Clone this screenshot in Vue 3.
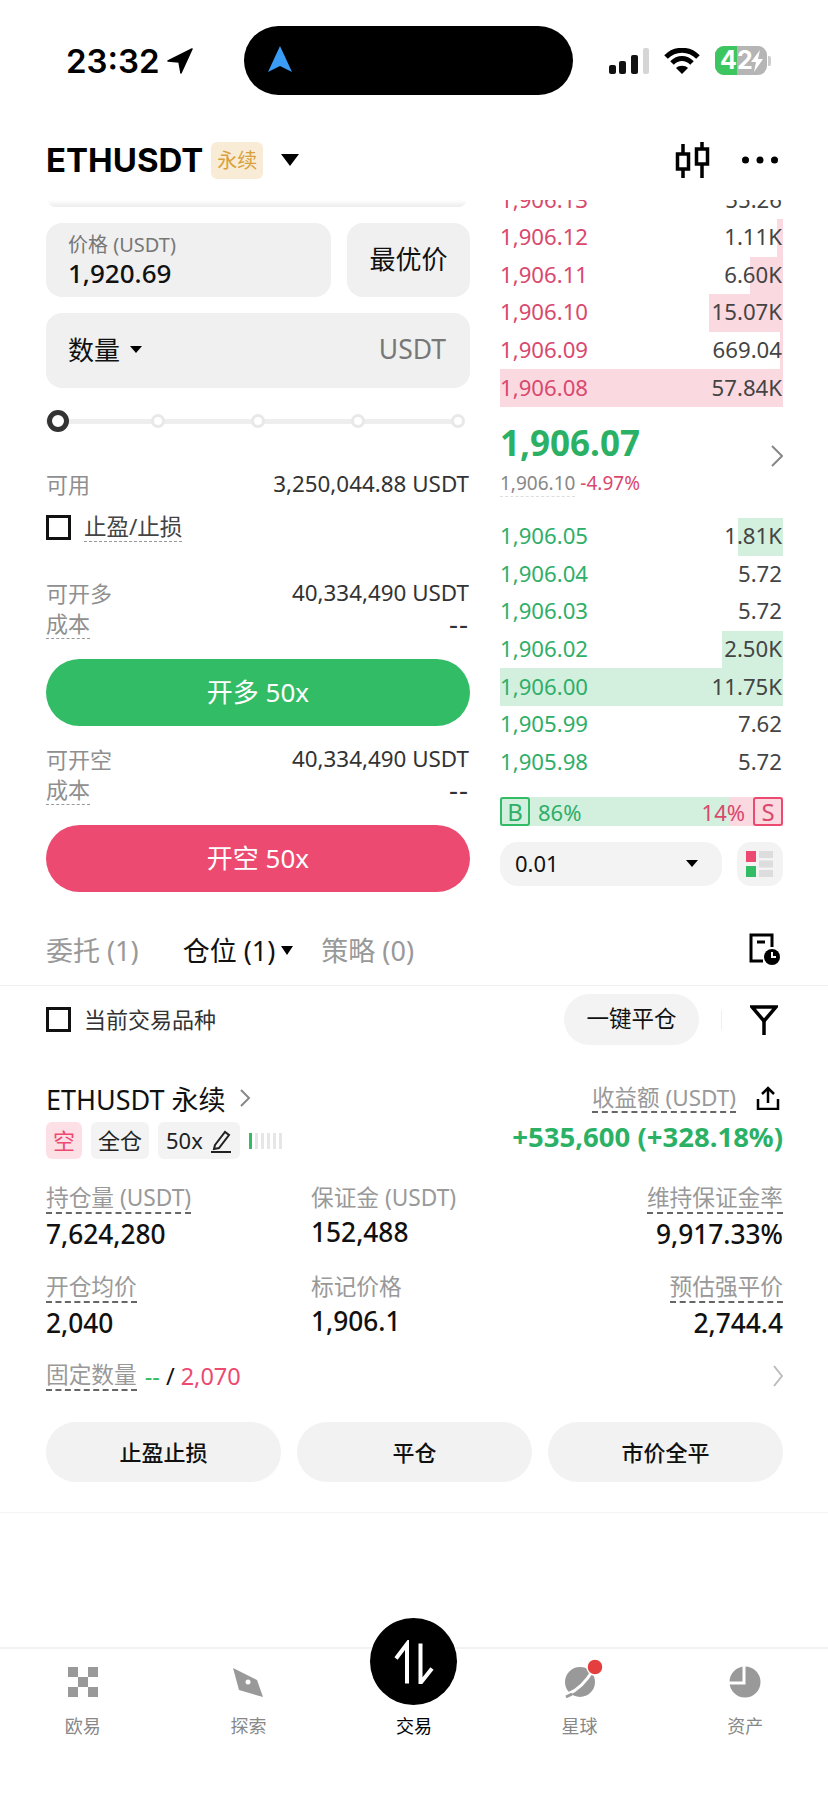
<script setup>
const asks = [
  { price: '1,906.13', size: '55.26', depth: 0 },
  { price: '1,906.12', size: '1.11K', depth: 2 },
  { price: '1,906.11', size: '6.60K', depth: 11.5 },
  { price: '1,906.10', size: '15.07K', depth: 26 },
  { price: '1,906.09', size: '669.04', depth: 1 },
  { price: '1,906.08', size: '57.84K', depth: 100 },
]
const bids = [
  { price: '1,906.05', size: '1.81K', depth: 16 },
  { price: '1,906.04', size: '5.72', depth: 0 },
  { price: '1,906.03', size: '5.72', depth: 0 },
  { price: '1,906.02', size: '2.50K', depth: 21.5 },
  { price: '1,906.00', size: '11.75K', depth: 100 },
  { price: '1,905.99', size: '7.62', depth: 0 },
  { price: '1,905.98', size: '5.72', depth: 0 },
]
const stats = [
  { label: '持仓量 (USDT)', value: '7,624,280', dashed: true },
  { label: '保证金 (USDT)', value: '152,488', dashed: false },
  { label: '维持保证金率', value: '9,917.33%', dashed: true, right: true },
  { label: '开仓均价', value: '2,040', dashed: true },
  { label: '标记价格', value: '1,906.1', dashed: false },
  { label: '预估强平价', value: '2,744.4', dashed: true, right: true },
]
const navItems = ['欧易', '探索', '交易', '星球', '资产']
</script>

<template>
  <div class="page">
    <!-- Status bar -->
    <div class="status">
      <div class="time">
        23:32
        <svg width="26" height="26" viewBox="0 0 26 26"><path d="M25 1 L1 13 L12 14 L14 25 Z" fill="#000" stroke="#000" stroke-width="1.5" stroke-linejoin="round" /></svg>
      </div>
      <div class="island">
        <svg width="24" height="26" viewBox="0 0 24 26"><path d="M12 0 L24 26 L12 20 L0 26 Z" fill="#3b9cf5" /></svg>
      </div>
      <div class="status-right">
        <svg width="42" height="26" viewBox="0 0 42 26">
          <rect x="0" y="17" width="7" height="9" rx="2" fill="#111" />
          <rect x="10" y="13" width="7" height="13" rx="2" fill="#111" />
          <rect x="22" y="7" width="7" height="19" rx="2" fill="#111" />
          <rect x="34" y="0" width="6" height="26" rx="2" fill="#d6d6d6" />
        </svg>
        <svg width="36" height="26" viewBox="0 0 36 26" fill="none" stroke="#000" stroke-width="5">
          <path d="M2 9 C11 0 25 0 34 9" />
          <path d="M8 15 C14 9 22 9 28 15" />
          <path d="M18 26 L12 20 C15 17 21 17 24 20 Z" fill="#000" stroke="none" />
        </svg>
        <div class="battery">
          <div class="battery-body">
            <span class="battery-fill"></span>
            <span class="battery-num">42</span>
            <svg class="bolt" width="14" height="22" viewBox="0 0 14 22"><path d="M10 0 L1 12 L6 12 L4 22 L13 9 L8 9 Z" fill="#fff" /></svg>
          </div>
          <span class="battery-nub"></span>
        </div>
      </div>
    </div>

    <!-- Header -->
    <div class="header">
      <div class="symbol">ETHUSDT</div>
      <span class="perp">永续</span>
      <span class="caret caret-lg"></span>
      <div class="header-icons">
        <svg width="36" height="38" viewBox="0 0 36 38" fill="none" stroke="#000" stroke-width="3.5">
          <path d="M8 3 V37 M27 1 V37" />
          <rect x="2.500" y="13" width="11" height="15" fill="#fff" />
          <rect x="21.500" y="8" width="11" height="15" fill="#fff" />
        </svg>
        <svg width="36" height="8" viewBox="0 0 36 8" fill="#000">
          <circle cx="3.500" cy="4" r="3.500" />
          <circle cx="18" cy="4" r="3.500" />
          <circle cx="32.500" cy="4" r="3.500" />
        </svg>
      </div>
    </div>

    <!-- Trade form and order book -->
    <div class="trade">
      <div class="form">
        <div class="clip-card"></div>
        <div class="price-row">
          <div class="field price-field">
            <div class="field-label">价格 (USDT)</div>
            <div class="field-value">1,920.69</div>
          </div>
          <div class="field best">最优价</div>
        </div>
        <div class="field qty">
          <span class="qty-name">数量</span>
          <span class="caret caret-sm"></span>
          <span class="qty-unit">USDT</span>
        </div>
        <div class="slider">
          <span class="knob"></span>
          <span class="dot"></span>
          <span class="dot"></span>
          <span class="dot"></span>
          <span class="dot"></span>
        </div>
        <div class="line avail">
          <span class="muted">可用</span>
          <span class="amount">3,250,044.88 USDT</span>
        </div>
        <div class="check-row tpsl">
          <span class="box"></span>
          <span class="tpsl-text">止盈/止损</span>
        </div>
        <div class="line open-first">
          <span class="muted">可开多</span>
          <span class="amount">40,334,490 USDT</span>
        </div>
        <div class="line cost">
          <span class="muted dashed">成本</span>
          <span class="amount none">--</span>
        </div>
        <button class="action long">开多 50x</button>
        <div class="line open-next">
          <span class="muted">可开空</span>
          <span class="amount">40,334,490 USDT</span>
        </div>
        <div class="line cost">
          <span class="muted dashed">成本</span>
          <span class="amount none">--</span>
        </div>
        <button class="action short">开空 50x</button>
      </div>

      <div class="book">
        <div class="asks-clip">
          <div class="asks">
            <div v-for="row in asks" :key="row.price" class="book-row">
              <span class="depth depth-ask" :style="{ width: row.depth + '%' }"></span>
              <span class="px px-ask">{{ row.price }}</span>
              <span class="sz">{{ row.size }}</span>
            </div>
          </div>
        </div>
        <div class="mid">
          <div>
            <div class="mid-price">1,906.07</div>
            <div class="mid-sub"><span class="mark">1,906.10</span> <span class="chg">-4.97%</span></div>
          </div>
          <svg class="mid-arrow" width="12" height="22" viewBox="0 0 12 22" fill="none" stroke="#888" stroke-width="2"><path d="M1 1 L11 11 L1 21" /></svg>
        </div>
        <div class="bids">
          <div v-for="row in bids" :key="row.price" class="book-row">
            <span class="depth depth-bid" :style="{ width: row.depth + '%' }"></span>
            <span class="px px-bid">{{ row.price }}</span>
            <span class="sz">{{ row.size }}</span>
          </div>
        </div>
        <div class="ratio">
          <span class="ratio-box ratio-b">B</span>
          <span class="ratio-num num-b">86%</span>
          <span class="ratio-num num-s">14%</span>
          <span class="ratio-box ratio-s">S</span>
        </div>
        <div class="book-tools">
          <div class="precision">
            <span>0.01</span>
            <span class="caret caret-sm"></span>
          </div>
          <div class="layout-btn">
            <svg width="28" height="28" viewBox="0 0 28 28">
              <rect x="0" y="1" width="10" height="11" fill="#ec4a70" />
              <rect x="0" y="16" width="10" height="11" fill="#33bc66" />
              <rect x="13" y="1" width="14" height="7" fill="#ddd" />
              <rect x="13" y="10.500" width="14" height="7" fill="#ddd" />
              <rect x="13" y="20" width="14" height="7" fill="#ddd" />
            </svg>
          </div>
        </div>
      </div>
    </div>

    <!-- Tabs -->
    <div class="tabs">
      <span class="tab">委托 (1)</span>
      <span class="tab tab-on">仓位 (1)</span>
      <span class="caret caret-xs"></span>
      <span class="tab tab-last">策略 (0)</span>
      <svg class="tab-icon" width="32" height="32" viewBox="0 0 32 32" fill="none" stroke="#000" stroke-width="3">
        <path d="M15 28 H3 V2 H24 V14" />
        <path d="M9 9 H17" />
        <circle cx="24" cy="24" r="8" fill="#000" stroke="none" />
        <path d="M24 19 V24 H28" stroke="#fff" stroke-width="2" />
      </svg>
    </div>

    <div class="filter-row">
      <div class="check-row">
        <span class="box"></span>
        <span class="filter-text">当前交易品种</span>
      </div>
      <div class="close-all">一键平仓</div>
      <span class="sep"></span>
      <svg width="28" height="30" viewBox="0 0 28 30" fill="none" stroke="#000" stroke-width="3.500" stroke-linejoin="miter">
        <path d="M2 2 H26 L14 16 Z" />
        <path d="M14 15 V30" />
      </svg>
    </div>

    <!-- Position -->
    <div class="position">
      <div class="pos-head">
        <div class="pos-left">
          <div class="pos-name">
            ETHUSDT 永续
            <svg width="12" height="20" viewBox="0 0 12 20" fill="none" stroke="#888" stroke-width="2"><path d="M2 2 L10 10 L2 18" /></svg>
          </div>
          <div class="tags">
            <span class="tag tag-short">空</span>
            <span class="tag">全仓</span>
            <span class="tag tag-lev">
              50x
              <svg width="22" height="24" viewBox="0 0 22 24" fill="none" stroke="#222" stroke-width="2"><path d="M5 16 L15 3 L19 6 L9 19 L4 20 Z" /><path d="M1 23 H21" /></svg>
            </span>
            <span class="meter">
              <i class="meter-on"></i><i></i><i></i><i></i><i></i><i></i>
            </span>
          </div>
        </div>
        <div class="pos-right">
          <div class="pnl-label">
            <span class="muted-md dashed-dark">收益额 (USDT)</span>
            <svg width="24" height="24" viewBox="0 0 24 24" fill="none" stroke="#000" stroke-width="2.500"><path d="M12 17 V2 M6 8 L12 2 L18 8" /><path d="M2 13 V23 H22 V13" /></svg>
          </div>
          <div class="pnl">+535,600 (+328.18%)</div>
        </div>
      </div>

      <div class="stats">
        <div v-for="item in stats" :key="item.label" class="stat" :class="{ 'stat-right': item.right, 'stat-plain': !item.dashed }">
          <span class="stat-label" :class="{ 'dashed-dark': item.dashed }">{{ item.label }}</span>
          <div class="stat-value">{{ item.value }}</div>
        </div>
      </div>

      <div class="fixed">
        <span class="stat-label dashed-dark">固定数量</span>
        <span class="fixed-green">--</span>
        <span class="fixed-slash">/</span>
        <span class="fixed-red">2,070</span>
        <svg class="fixed-arrow" width="10" height="22" viewBox="0 0 10 22" fill="none" stroke="#bbb" stroke-width="2"><path d="M1 1 L9 11 L1 21" /></svg>
      </div>

      <div class="pos-btns">
        <button class="pos-btn">止盈止损</button>
        <button class="pos-btn">平仓</button>
        <button class="pos-btn">市价全平</button>
      </div>
    </div>

    <div class="end-line"></div>

    <!-- Bottom navigation -->
    <div class="nav">
      <div v-for="(name, i) in navItems" :key="name" class="nav-item" :class="{ 'nav-on': i === 2 }">
        <svg v-if="i === 0" width="32" height="32" viewBox="0 0 32 32" fill="#999">
          <rect x="1" y="1" width="10" height="10" />
          <rect x="21" y="1" width="10" height="10" />
          <rect x="11" y="11" width="10" height="10" />
          <rect x="1" y="21" width="10" height="10" />
          <rect x="21" y="21" width="10" height="10" />
        </svg>
        <svg v-else-if="i === 1" width="32" height="32" viewBox="0 0 32 32">
          <path d="M1 2 L25 14 L31 31 L7 24 Z" fill="#999" />
          <circle cx="16" cy="16" r="2.500" fill="#fff" />
        </svg>
        <div v-else-if="i === 2" class="nav-circle">
          <svg width="44" height="44" viewBox="0 0 44 44" fill="none" stroke="#fff" stroke-width="4">
            <path d="M4 18.500 L15 4 V43.500" />
            <path d="M28.500 3.500 V43 L40 28.500" />
          </svg>
        </div>
        <svg v-else-if="i === 3" class="planet" width="32" height="32" viewBox="0 0 32 32">
          <circle cx="16" cy="16" r="15" fill="#999" />
          <path d="M29 4 C22 16 14 24 4 28" fill="none" stroke="#fff" stroke-width="3" />
          <path d="M8 28 L2 31" fill="none" stroke="#999" stroke-width="3" />
          <circle cx="31" cy="1" r="8" fill="#e53e3e" stroke="#fff" stroke-width="1.500" />
        </svg>
        <svg v-else width="32" height="32" viewBox="0 0 32 32">
          <circle cx="16" cy="16" r="15.500" fill="#999" />
          <path d="M15 0 V17 H0" fill="none" stroke="#fff" stroke-width="3" />
        </svg>
        <span class="nav-text">{{ name }}</span>
      </div>
    </div>
  </div>
</template>

<style>
html,
body {
  margin: 0;
  background: #fff;
}
</style>

<style scoped>
.page {
  width: 828px;
  height: 1800px;
  overflow: hidden;
  background: #fff;
  font-family: "Noto Sans", "Noto Sans CJK SC", sans-serif;
  color: #111;
}

/* status bar */
.status {
  height: 89px;
  padding: 26px 57px 0 66px;
  display: flex;
  justify-content: space-between;
}
.time {
  flex: none;
  width: 131px;
  height: 69px;
  display: flex;
  align-items: center;
  gap: 7px;
  font-family: "Inter", "Liberation Sans", sans-serif;
  font-size: 33px;
  font-weight: 600;
  color: #000;
}
.island {
  flex: none;
  width: 329px;
  height: 69px;
  margin-left: 46px;
  padding: 20px 0 0 24px;
  box-sizing: border-box;
  background: #000;
  border-radius: 35px;
}
.status-right {
  flex: none;
  height: 69px;
  display: flex;
  align-items: center;
  gap: 13px;
  margin-left: 36px;
}
.battery {
  margin-left: 2px;
  display: flex;
  align-items: center;
  gap: 1px;
}
.battery-body {
  position: relative;
  width: 52px;
  height: 29px;
  border-radius: 9px;
  background: #b5b5b5;
  overflow: hidden;
  font-family: "Inter", sans-serif;
  font-size: 25px;
  font-weight: 700;
  color: #fff;
  line-height: 29px;
}
.battery-fill {
  position: absolute;
  inset: 0 auto 0 0;
  width: 22px;
  background: #3dc660;
}
.battery-num {
  position: absolute;
  left: 5px;
  top: 0;
}
.bolt {
  position: absolute;
  right: 3px;
  top: 4px;
}
.battery-nub {
  width: 3px;
  height: 10px;
  border-radius: 0 2px 2px 0;
  background: #ccc;
}

/* header */
.header {
  height: 85px;
  padding: 5px 50px 0 46px;
  box-sizing: border-box;
  display: flex;
  align-items: center;
}
.symbol {
  font-family: "Inter", sans-serif;
  font-size: 33px;
  font-weight: 700;
  color: #000;
}
.perp {
  margin-left: 8px;
  width: 52px;
  height: 37px;
  line-height: 37px;
  text-align: center;
  background: #f8ecd6;
  border-radius: 6px;
  font-size: 20px;
  color: #d9a13d;
}
.caret {
  display: inline-block;
  width: 0;
  height: 0;
  border-style: solid;
  border-color: #000 transparent transparent;
}
.caret-lg {
  margin-left: 18px;
  border-width: 12px 9px 0;
}
.caret-sm {
  border-width: 7px 6px 0;
}
.caret-xs {
  margin: 2px 0 0 6px;
  border-width: 9px 6px 0;
}
.header-icons {
  margin-left: auto;
  display: flex;
  align-items: center;
  gap: 31px;
}

/* form */
.trade {
  display: grid;
  grid-template-columns: 424px 283px;
  column-gap: 30px;
  padding: 0 0 13px 46px;
}
.clip-card {
  height: 7px;
  margin: 0 4px 16px 2px;
  background: linear-gradient(#fff, #ececec);
  border-radius: 0 0 14px 14px;
}
.price-row {
  display: flex;
  gap: 16px;
}
.field {
  background: #f0f0f0;
  border-radius: 16px;
  box-sizing: border-box;
}
.price-field {
  flex: 1;
  height: 74px;
  padding: 9px 22px 0;
}
.field-label {
  font-size: 20px;
  line-height: 25px;
  color: #777;
}
.field-value {
  font-size: 26px;
  line-height: 32px;
  font-weight: 500;
  color: #111;
}
.best {
  width: 123px;
  height: 74px;
  line-height: 72px;
  text-align: center;
  font-size: 26px;
}
.qty {
  height: 75px;
  margin-top: 16px;
  padding: 0 24px 3px 22px;
  display: flex;
  align-items: center;
  gap: 10px;
}
.qty-name {
  font-size: 26px;
}
.qty-unit {
  margin-left: auto;
  font-size: 26.5px;
  color: #777;
}
.slider {
  position: relative;
  height: 22px;
  margin-top: 22px;
  padding: 0 5px 0 1px;
  display: flex;
  align-items: center;
  justify-content: space-between;
  background: linear-gradient(#eee, #eee) 0 center / 415px 5px no-repeat;
}
.knob {
  width: 22px;
  height: 22px;
  margin-right: -4px;
  box-sizing: border-box;
  border: 5px solid #333;
  border-radius: 50%;
  background: #fff;
}
.dot {
  width: 14px;
  height: 14px;
  box-sizing: border-box;
  border: 3px solid #e8e8e8;
  border-radius: 50%;
  background: #fff;
}
.line {
  display: flex;
  justify-content: space-between;
  align-items: flex-start;
  line-height: 30px;
}
.muted {
  font-size: 22px;
  color: #8f8f8f;
}
.dashed {
  border-bottom: 1px dashed #999;
}
.amount {
  margin-right: 1px;
  font-size: 22.4px;
  color: #333;
}
.none {
  font-size: 28px;
  letter-spacing: 1px;
}
.avail {
  margin-top: 37px;
}
.check-row {
  display: flex;
  align-items: center;
  gap: 13px;
}
.tpsl {
  margin-top: 14px;
}
.box {
  width: 25px;
  height: 25px;
  box-sizing: border-box;
  border: 3px solid #111;
}
.tpsl-text {
  font-size: 22.5px;
  line-height: 28px;
  color: #444;
  border-bottom: 1px dashed #999;
}
.open-first {
  margin-top: 36px;
}
.cost {
  margin-top: 0;
}
.open-next {
  margin-top: 18px;
}
.action {
  display: block;
  width: 100%;
  height: 67px;
  margin-top: 20px;
  padding: 0 0 4px;
  border: 0;
  border-radius: 34px;
  color: #fff;
  font-family: inherit;
  font-size: 26px;
}
.long {
  background: #33bc66;
}
.short {
  background: #ec4a70;
}

/* order book */
.asks-clip {
  height: 207px;
  overflow: hidden;
}
.asks {
  margin-top: -18.6px;
}
.book-row {
  position: relative;
  height: 37.6px;
  padding-bottom: 2px;
  box-sizing: border-box;
  display: flex;
  justify-content: space-between;
  align-items: center;
  font-size: 22.2px;
}
.depth {
  position: absolute;
  top: 0;
  right: 0;
  bottom: 0;
}
.depth-ask {
  background: #fbd9e0;
}
.depth-bid {
  background: #d3f0df;
}
.px,
.sz {
  position: relative;
}
.sz {
  padding-right: 1px;
  color: #444;
}
.px-ask {
  color: #d9486e;
}
.px-bid {
  color: #2fae68;
}
.mid {
  height: 111px;
  padding-top: 13px;
  box-sizing: border-box;
  display: flex;
  justify-content: space-between;
  align-items: flex-start;
}
.mid-price {
  font-size: 35px;
  font-weight: 700;
  line-height: 46px;
  color: #2bb165;
}
.mid-sub {
  margin-top: 4px;
  font-size: 19px;
  line-height: 26px;
}
.mid-arrow {
  margin-top: 25px;
}
.mark {
  color: #888;
  border-bottom: 1px dashed #ddd;
}
.chg {
  color: #d9486e;
}
.ratio {
  height: 29px;
  margin-top: 16px;
  display: flex;
  align-items: center;
  background: linear-gradient(90deg, #d3f0df 81%, #fbd9e0 81%);
  font-size: 22px;
}
.ratio-box {
  width: 30px;
  height: 29px;
  line-height: 25px;
  text-align: center;
  box-sizing: border-box;
  border: 2px solid;
  border-radius: 3px;
  font-size: 24px;
}
.ratio-b {
  border-color: #33bc66;
  color: #2fae68;
}
.ratio-s {
  border-color: #ec4a70;
  color: #d9486e;
}
.num-b {
  margin-left: 8px;
  color: #2fae68;
}
.num-s {
  margin: 0 8px 0 auto;
  color: #d9486e;
}
.book-tools {
  margin-top: 16px;
  display: flex;
  gap: 15px;
}
.precision {
  width: 222px;
  height: 44px;
  padding: 0 24px 2px 15px;
  box-sizing: border-box;
  display: flex;
  justify-content: space-between;
  align-items: center;
  background: #f3f3f3;
  border-radius: 18px;
  font-size: 22px;
}
.layout-btn {
  width: 46px;
  height: 44px;
  background: #f3f3f3;
  border-radius: 14px;
  display: flex;
  align-items: center;
  justify-content: center;
}

/* tabs */
.tabs {
  height: 81px;
  padding: 10px 48px 2px 46px;
  box-sizing: border-box;
  display: flex;
  align-items: center;
  border-bottom: 1px solid #eee;
}
.tab {
  font-size: 27px;
  color: #999;
}
.tab-on {
  margin-left: 44px;
  color: #111;
}
.tab-last {
  margin-left: 28px;
}
.tab-icon {
  margin-left: auto;
}

.filter-row {
  height: 67px;
  padding: 0 50px 0 46px;
  display: flex;
  align-items: center;
}
.filter-text {
  padding-bottom: 3px;
  font-size: 22px;
  color: #333;
}
.close-all {
  margin-left: auto;
  width: 135px;
  height: 51px;
  line-height: 49px;
  text-align: center;
  background: #f3f3f3;
  border-radius: 26px;
  font-size: 22.5px;
}
.sep {
  width: 1px;
  height: 20px;
  margin: 0 28px 0 22px;
  background: #eee;
}

/* position */
.position {
  padding: 28px 45px 0 46px;
}
.pos-head {
  display: flex;
  justify-content: space-between;
}
.pos-name {
  display: flex;
  align-items: center;
  gap: 13px;
  height: 34px;
  font-size: 27px;
  color: #111;
}
.tags {
  margin-top: 7px;
  display: flex;
  align-items: center;
  gap: 9px;
}
.tag {
  height: 37px;
  line-height: 37px;
  padding: 0 7px;
  background: #f3f3f3;
  border-radius: 6px;
  font-size: 22px;
  color: #222;
}
.tag-short {
  background: #fde0e6;
  color: #ec4a70;
}
.tag-lev {
  display: flex;
  align-items: center;
  gap: 7px;
  padding: 0 8px;
}
.meter {
  display: flex;
  gap: 3px;
}
.meter i {
  width: 3px;
  height: 16px;
  background: #e6e6e6;
}
.meter .meter-on {
  background: #33bc66;
}
.pos-right {
  text-align: right;
}
.pnl-label {
  height: 34px;
  display: flex;
  justify-content: flex-end;
  align-items: center;
  gap: 20px;
  padding-right: 3px;
}
.muted-md {
  font-size: 22.5px;
  line-height: 27px;
  color: #999;
}
.dashed-dark {
  border-bottom: 2px dashed #666;
}
.pnl {
  margin-top: 5px;
  font-size: 27.5px;
  line-height: 34px;
  font-weight: 700;
  color: #2bb165;
}
.stats {
  margin-top: 25px;
  display: grid;
  grid-template-columns: 265px 1fr 1fr;
  row-gap: 21px;
}
.stat-right {
  text-align: right;
}
.stat-label {
  display: inline-block;
  font-size: 22.7px;
  line-height: 28px;
  color: #999;
}
.stat-value {
  margin-top: 2px;
  font-size: 26.3px;
  line-height: 36px;
  font-weight: 500;
  color: #111;
}
.fixed {
  margin-top: 19px;
  display: flex;
  align-items: center;
  font-size: 23.5px;
}
.fixed-green {
  margin-left: 8px;
  color: #33bc66;
}
.fixed-slash {
  margin: 0 6px;
  color: #111;
}
.fixed-red {
  color: #ec4a70;
}
.fixed-arrow {
  margin-left: auto;
}
.pos-btns {
  margin-top: 30px;
  display: grid;
  grid-template-columns: repeat(3, 1fr);
  gap: 16px;
}
.pos-btn {
  height: 60px;
  padding: 0 0 2px;
  border: 0;
  border-radius: 30px;
  background: #f2f2f2;
  font-family: inherit;
  font-size: 22px;
  font-weight: 500;
  color: #111;
}
.end-line {
  height: 1px;
  margin-top: 30px;
  background: #f4f4f4;
}

/* bottom nav */
.nav {
  margin-top: 134px;
  height: 100px;
  border-top: 2px solid #f2f2f2;
  display: grid;
  grid-template-columns: repeat(5, 165.6px);
}
.nav-item {
  position: relative;
  padding-top: 17px;
  display: flex;
  flex-direction: column;
  align-items: center;
}
.planet {
  overflow: visible;
}
.nav-circle {
  position: absolute;
  top: -31px;
  width: 87px;
  height: 87px;
  border-radius: 50%;
  background: #000;
  display: flex;
  align-items: center;
  justify-content: center;
}
.nav-text {
  position: absolute;
  top: 65px;
  font-size: 18px;
  line-height: 24px;
  color: #888;
}
.nav-on .nav-text {
  color: #000;
}
</style>
